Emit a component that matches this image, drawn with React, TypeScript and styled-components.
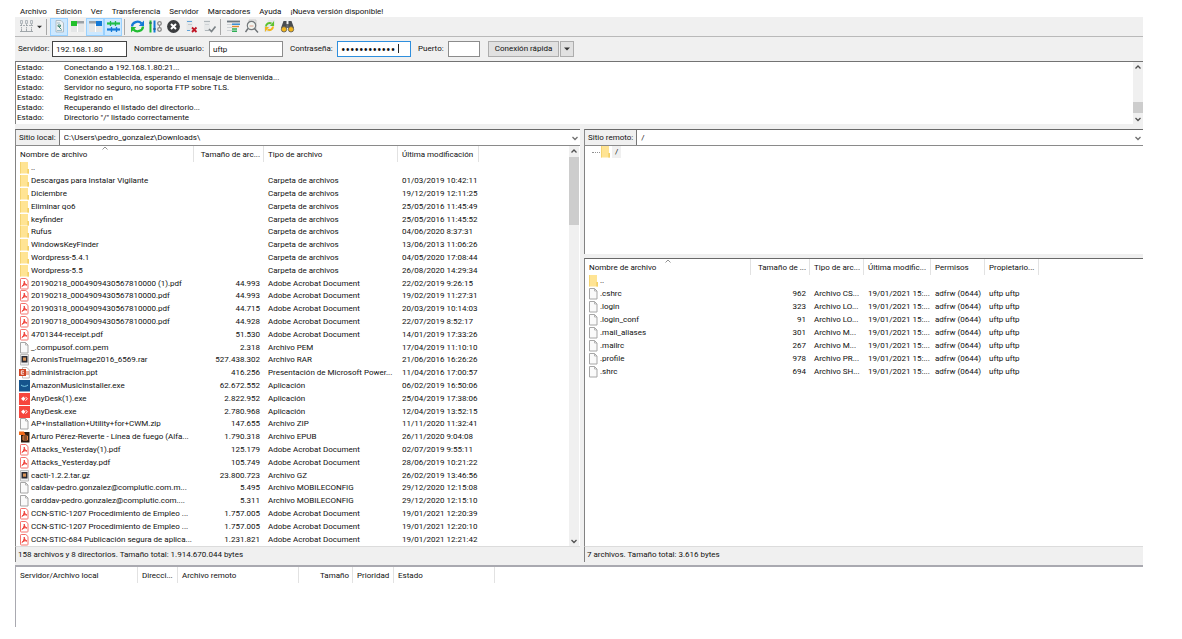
import React from 'react';
import styled, { createGlobalStyle, css } from 'styled-components';

const GlobalStyle = createGlobalStyle`
  *, *::before, *::after { box-sizing: border-box; }
  body { margin: 0; background: #fff; }
  body, button, input, select, table {
    font-family: Roboto, 'Open Sans', sans-serif;
    font-size: 8px;
    line-height: 12px;
    color: #101010;
  }
`;

const Window = styled.div`
  margin: 0 39px 0 15px;
  background: #fff;
`;

/* ---------- menu ---------- */

const MenuBar = styled.nav`
  display: flex;
  align-items: flex-end;
  gap: 9px;
  height: 17px;
  padding-left: 5px;
`;

const MenuItem = styled.button`
  padding: 0;
  border: 0;
  background: none;
  line-height: 10px;
  white-space: nowrap;
`;

/* ---------- toolbar ---------- */

const Toolbar = styled.div`
  display: flex;
  align-items: center;
  height: 20px;
  padding-left: 2px;
  background: #f0f0f0;
  border-bottom: 1px solid #b9b9b9;
`;

const ToolButton = styled.button<{ $active?: boolean; $narrow?: boolean }>`
  display: flex;
  align-items: center;
  justify-content: center;
  width: ${(p) => (p.$narrow ? 9 : 18)}px;
  height: 18px;
  padding: 0;
  border: 1px solid transparent;
  background: none;
  ${(p) => p.$active && css`
    background: #cce8ff;
    border-color: #99d1ff;
  `}
  svg { flex: none; }
`;

const ToolSeparator = styled.span`
  width: 1px;
  height: 16px;
  margin: 0 3px 0 2px;
  background: #a8a8a8;
`;

/* ---------- quick connect ---------- */

const QuickBar = styled.form`
  display: flex;
  align-items: center;
  gap: 7px;
  height: 24px;
  padding-left: 3px;
  background: #f0f0f0;
`;

const Field = styled.div`
  position: relative;
  display: flex;
  align-items: center;
`;

const FieldLabel = styled.label<{ $width: number }>`
  width: ${(p) => p.$width}px;
  white-space: nowrap;
`;

const FieldInput = styled.input<{ $width: number; $tone?: string }>`
  width: ${(p) => p.$width}px;
  height: 16px;
  padding: 0 3px;
  border: 1px solid ${(p) => p.$tone || '#8c8c8c'};
  background: #fff;
  outline: none;
  &[type='password'] {
    font-family: 'Open Sans', sans-serif;
    font-size: 12px;
  }
`;

const Caret = styled.span`
  position: absolute;
  right: 12px;
  top: 3px;
  width: 1px;
  height: 9px;
  background: #222;
`;

const ButtonPair = styled.div`
  display: flex;
  gap: 1px;
  padding-left: 1px;
`;

const PushButton = styled.button<{ $width: number }>`
  display: flex;
  align-items: center;
  justify-content: center;
  width: ${(p) => p.$width}px;
  height: 16px;
  padding: 0;
  border: 1px solid #adadad;
  background: #e1e1e1;
  white-space: nowrap;
`;

/* ---------- message log ---------- */

const LogPanel = styled.section`
  display: flex;
  justify-content: space-between;
  height: 63px;
  border-top: 1px solid #737373;
  border-left: 1px solid #828282;
`;

const LogLines = styled.dl`
  display: grid;
  grid-template-columns: 47px auto;
  grid-auto-rows: 10px;
  align-content: start;
  margin: 0;
  padding: 1px 0 0 1px;
  line-height: 10px;
  dd { margin: 0; }
`;

/* ---------- scroll bar ---------- */

const ScrollTrack = styled.div`
  display: flex;
  flex-direction: column;
  align-items: center;
  flex: none;
  width: 10px;
  background: #f0f0f0;
  svg { flex: none; }
`;

const ScrollThumb = styled.div<{ $height: number; $before: number }>`
  width: 100%;
  height: ${(p) => p.$height}px;
  margin-top: ${(p) => p.$before}px;
  margin-bottom: auto;
  background: #cdcdcd;
`;

/* ---------- panes ---------- */

const Panes = styled.main`
  display: grid;
  grid-template-columns: 565fr 559fr;
  gap: 4px;
  padding: 5px 0 3px;
  background: #f0f0f0;
`;

const Pane = styled.section`
  display: flex;
  flex-direction: column;
  min-width: 0;
`;

const PathBar = styled.div`
  display: flex;
  align-items: stretch;
  height: 17px;
  border: solid #8a8a8a;
  border-width: 1px 0 1px 1px;
  border-top-color: #696969;
  background: #fff;
  padding-right: 1px;
  svg { align-self: center; flex: none; }
`;

const PathLabel = styled.label`
  padding: 2px 3px 0;
  background: #f0f0f0;
  border-right: 1px solid #777;
  white-space: nowrap;
`;

const PathSelect = styled.select`
  flex: 1;
  min-width: 0;
  padding: 0 4px;
  border: 0;
  background: #fff;
  appearance: none;
  outline: none;
`;

const ListArea = styled.div<{ $topped?: boolean }>`
  display: flex;
  flex: 1;
  align-items: flex-start;
  border-left: 1px solid #828282;
  border-top: ${(p) => (p.$topped ? '1px solid #696969' : '0')};
  background: #fff;
  ${ScrollTrack} { align-self: stretch; margin-right: 1px; }
`;

const Tree = styled.ul`
  height: 108px;
  margin: 0 0 4px;
  padding: 0 0 0 7px;
  list-style: none;
  border-left: 1px solid #828282;
  background: #fff;
`;

const TreeItem = styled.li`
  display: flex;
  align-items: center;
  height: 12px;
`;

const TreeLine = styled.span`
  width: 8px;
  border-top: 1px dotted #909090;
`;

const TreeText = styled.span`
  margin-left: 1px;
  padding: 0 3px;
  background: #f0f0f0;
`;

const PaneStatus = styled.footer`
  height: 16px;
  padding: 2px;
  border-left: 1px solid #828282;
  border-top: 1px solid #dcdcdc;
  background: #f0f0f0;
`;

/* ---------- tables ---------- */

const DataTable = styled.table<{ $height?: number }>`
  flex: 1;
  width: 100%;
  height: ${(p) => (p.$height ? `${p.$height}px` : 'auto')};
  table-layout: fixed;
  border-collapse: separate;
  border-spacing: 0;
`;

const HeadCell = styled.th<{ $right?: boolean; $last?: boolean }>`
  position: relative;
  height: 16px;
  padding: 1px ${(p) => (p.$right ? 3 : 0)}px 0 4px;
  border-right: ${(p) => (p.$last ? '0' : '1px solid #e2e2e2')};
  font-weight: 400;
  text-align: ${(p) => (p.$right ? 'right' : 'left')};
  white-space: nowrap;
`;

const SortMark = styled.svg`
  position: absolute;
  left: calc(50% - 3px);
  top: 0;
`;

const Cell = styled.td<{ $right?: boolean }>`
  padding: 0 ${(p) => (p.$right ? 4 : 0)}px 0 4px;
  text-align: ${(p) => (p.$right ? 'right' : 'left')};
  white-space: nowrap;
`;

const NameCell = styled.td`
  padding: 0 0 0 3px;
  white-space: nowrap;
`;

const NameWrap = styled.div`
  display: flex;
  align-items: center;
  gap: 1px;
  svg { flex: none; }
`;

const QueuePanel = styled.section`
  height: 62px;
  border-top: 2px solid #a9a9b0;
  border-left: 1px solid #a9a9b0;
`;

/* ---------- file icons ---------- */

type Kind = 'folder' | 'pdf' | 'file' | 'archive' | 'ppt' | 'amazon' | 'anydesk' | 'epub';

function FileIcon({ kind }: { kind: Kind }) {
  return (
    <svg width="11" height="12" viewBox="0 0 11 12" aria-hidden="true">
      {kind === 'folder' && (
        <>
          <path d="M1 0h8v7.500h1V11.500H1z" fill="#ffe494" />
          <path d="M1 0h.8v11.500H1zM8.300 7H10v4.500H8.300z" fill="#f2d06a" />
        </>
      )}
      {kind === 'pdf' && (
        <>
          <path d="M2.200.5h4.600l2.200 2v7.800a.7.7 0 0 1-.7.7H2.200a.7.7 0 0 1-.7-.7V1.200a.7.7 0 0 1 .7-.7z" fill="#fff" stroke="#f4726d" />
          <path d="M2.800 8.500C4.500 7.400 5.300 5 5.200 3.100c.6 2.500 1.300 3.300 2.800 4C6.300 6.500 4.600 7 2.800 8.500z" fill="#f2544d" stroke="#ee3a32" strokeWidth=".9" />
        </>
      )}
      {kind === 'file' && (
        <>
          <path d="M1.500.5h5l2.500 2.500v8h-7.500z" fill="#fafafa" stroke="#a6a6a6" />
          <path d="M6.500.5V3h2.500" fill="none" stroke="#a6a6a6" strokeWidth=".8" />
        </>
      )}
      {kind === 'archive' && (
        <>
          <path d="M1.500.5h8v10.500h-8z" fill="#ededed" stroke="#bdbdbd" />
          <path d="M2.500 2h6v6.500h-6z" fill="#2b2b33" />
          <path d="M4 3.500h3v3.200H4z" fill="#d99458" />
        </>
      )}
      {kind === 'ppt' && (
        <>
          <path d="M3.500.5h4.500l2.300 2.500v8h-6.800z" fill="#fff" stroke="#b5a9a4" strokeWidth=".8" />
          <path d="M7 4.500h3v1H7zM7 6.500h3v1H7z" fill="#e06a45" />
          <path d="M0 2h7v7H0z" fill="#d04423" />
          <path d="M4.800 3.800H2.300v3.400h2.500M4.800 5.500H3.500" fill="none" stroke="#fff" strokeWidth=".9" />
        </>
      )}
      {kind === 'amazon' && (
        <>
          <path d="M0 0h11v11.500H0z" fill="#15548c" />
          <path d="M2 5c2 1.800 5 1.800 7 0" fill="none" stroke="#7fd0ea" />
        </>
      )}
      {kind === 'anydesk' && (
        <>
          <path d="M0 0h11v12H0z" fill="#f6463d" />
          <path d="M4.300 3.600L6.500 5.800 4.300 8 2.100 5.800z" fill="#fff" />
          <path d="M6.500 3.900L8.400 5.800 6.500 7.700" fill="none" stroke="#fff" />
        </>
      )}
      {kind === 'epub' && (
        <>
          <path d="M2 1h8.500v10.500H2z" fill="#2b1b12" />
          <path d="M0 .5h5l1.500 3.500H0z" fill="#f26a1b" />
          <path d="M4 5h4.500v4H4zM4 7h4" fill="none" stroke="#e88344" />
        </>
      )}
    </svg>
  );
}

function Chevron({ up = false, color = '#505050' }: { up?: boolean; color?: string }) {
  return (
    <svg width="8" height="10" viewBox="0 0 8 10" aria-hidden="true">
      <path d={up ? 'M1.500 6.500L4 4l2.500 2.500' : 'M1.500 4L4 6.500 6.500 4'} fill="none" stroke={color} strokeWidth="1.300" />
    </svg>
  );
}

const DownTriangle = ({ size = 6 }: { size?: number }) => (
  <svg width={size} height="4" viewBox="0 0 6 4" aria-hidden="true">
    <path d="M0 .5h6L3 3.500z" fill="#333" />
  </svg>
);

/* ---------- toolbar icons ---------- */

const toolIcons: Record<string, React.ReactNode> = {
  sites: (
    <>
      <path d="M1.500 1.500h2v3h-2zM6.500 1.500h2v3h-2zM11.500 1.500h2v3h-2z" fill="#e4e7e9" stroke="#a4abb0" strokeWidth=".8" />
      <path d="M2.500 5v4M7.500 5v4M12.500 5v4M1 6.500h13" stroke="#979ea3" fill="none" strokeWidth=".8" strokeDasharray="2 1" />
      <path d="M1 12.500h13M2.500 9.500v3M7.500 9.500v3M12.500 9.500v3" stroke="#979ea3" strokeWidth=".9" fill="none" />
    </>
  ),
  log: (
    <>
      <path d="M4 1.500h5l2.500 2.500v9H4z" fill="#eef2f4" stroke="#a3b1ba" strokeWidth=".8" />
      <path d="M5 4h3M5 11.500h5" stroke="#86aec0" strokeWidth=".8" />
      <path d="M6 6h2.500v1.500H6zM7 8l2.500 2.500" fill="none" stroke="#4c8f7a" />
    </>
  ),
  localTree: (
    <>
      <path d="M1 2h13v11H1z" fill="#e4e6e7" />
      <path d="M1 2h13v2.500H1z" fill="#9aa1a6" />
      <path d="M1 2h6v5H1z" fill="#21c02c" />
      <path d="M7.500 5v8" stroke="#fff" />
    </>
  ),
  remoteTree: (
    <>
      <path d="M1 2h13v11H1z" fill="#e4e6e7" />
      <path d="M1 2h13v2.500H1z" fill="#9aa1a6" />
      <path d="M8 2h6v5H8z" fill="#1479d6" />
      <path d="M7.500 5v8" stroke="#fff" />
    </>
  ),
  queue: (
    <>
      <path d="M1 4.500h13" stroke="#21c04a" strokeWidth="2.200" fill="none" />
      <path d="M4.500 2v5M9.500 2v5" stroke="#21b84a" strokeWidth="1.300" fill="none" />
      <path d="M1 10.500h13" stroke="#1479d6" strokeWidth="2.200" fill="none" />
      <path d="M5.500 8v5M10.500 8v5" stroke="#1479d6" strokeWidth="1.300" fill="none" />
    </>
  ),
  refresh: (
    <>
      <path d="M2 7.500a5.500 5 0 0 1 9.500-3.200" stroke="#1479d6" strokeWidth="2.300" fill="none" />
      <path d="M14 1.500v5.500H8.800z" fill="#1479d6" />
      <path d="M13 7.500a5.500 5 0 0 1-9.500 3.200" stroke="#22bd33" strokeWidth="2.300" fill="none" />
      <path d="M1 13.500V8h5.200z" fill="#22bd33" />
    </>
  ),
  process: (
    <>
      <path d="M2.500 1.500v12" stroke="#22bd33" strokeWidth="2" />
      <path d="M6.500 1.500v12" stroke="#1479d6" strokeWidth="2" />
      <path d="M1 4h3M5 10h3" stroke="#25506e" />
      <circle cx="11.500" cy="4.500" r="1.800" fill="none" stroke="#888" strokeWidth="1.300" />
      <circle cx="11.500" cy="10.500" r="1.800" fill="none" stroke="#888" strokeWidth="1.300" />
      <path d="M11.500 6v3" stroke="#888" />
    </>
  ),
  cancel: (
    <>
      <circle cx="7.500" cy="7.500" r="6.400" fill="#3b3d3f" />
      <path d="M5 5l5 5M10 5l-5 5" stroke="#fff" strokeWidth="2" />
    </>
  ),
  disconnect: (
    <>
      <path d="M2.500 1h6v11h-6z" fill="#e6e8e9" />
      <path d="M3 2.500h5M3 11.500h3" stroke="#5fa2d8" />
      <path d="M4 5.500h4" stroke="#c5cacd" />
      <path d="M8 8.500l4.500 4.500M12.500 8.500L8 13" stroke="#c01525" strokeWidth="1.800" />
    </>
  ),
  reconnect: (
    <>
      <path d="M2 1h6v11H2z" fill="#e6e8e9" />
      <path d="M2 2.500h6M3 11.500h4" stroke="#aeb5b9" />
      <path d="M3 5.500h4" stroke="#cfd3d6" />
      <path d="M7 10l2.500 2.500L13.500 7.500" fill="none" stroke="#7c8387" strokeWidth="1.700" />
    </>
  ),
  filter: (
    <>
      <path d="M1 2.500h13" stroke="#6b757d" strokeWidth="1.800" />
      <path d="M1 5.500h5M1 8.500h5M1 11.500h5" stroke="#cdd1d4" />
      <path d="M6 5.200h8" stroke="#2a85d0" strokeWidth="1.400" />
      <path d="M6 7.500h7" stroke="#e08b2d" strokeWidth="1.400" />
      <path d="M6 10h5M6 12.300h5" stroke="#2eae55" strokeWidth="1.400" />
    </>
  ),
  search: (
    <>
      <path d="M5 1h7v9H5z" fill="#eee" stroke="#b7b7b7" strokeWidth=".6" />
      <circle cx="7.500" cy="6.500" r="4.200" fill="#eff3ef" stroke="#74797c" strokeWidth="1.200" />
      <path d="M5.500 7h4" stroke="#e0a18c" />
      <path d="M10.500 9.500l3.500 4M4 9.500L1.500 13" stroke="#6d7275" strokeWidth="1.400" />
    </>
  ),
  sync: (
    <>
      <path d="M6 1h7v6H6zM2 7h6v6H2z" fill="#e3e6e7" />
      <path d="M4 7.500a3.600 3.600 0 0 1 5.500-3" stroke="#5cc22f" strokeWidth="2" fill="none" />
      <path d="M12 2v5H8z" fill="#5cc22f" />
      <path d="M11 7.500a3.600 3.600 0 0 1-5.500 3" stroke="#f2b51d" strokeWidth="2" fill="none" />
      <path d="M3 13V8h4z" fill="#f2b51d" />
    </>
  ),
  find: (
    <>
      <path d="M3.500 2h3v3h2V2h3l2.500 7H1z" fill="#4a4d50" />
      <circle cx="4" cy="10.300" r="2.700" fill="#f2b51d" stroke="#55585a" strokeWidth=".8" />
      <circle cx="11" cy="10.300" r="2.700" fill="#f2b51d" stroke="#55585a" strokeWidth=".8" />
      <path d="M6.500 5h2v4h-2z" fill="#6b6f72" />
    </>
  ),
};

function Tool({ name, label, active }: { name: string; label: string; active?: boolean }) {
  return (
    <ToolButton type="button" aria-label={label} $active={active}>
      <svg width="15" height="15" viewBox="0 0 15 15">{toolIcons[name]}</svg>
    </ToolButton>
  );
}

/* ---------- data ---------- */

const menu = ['Archivo', 'Edición', 'Ver', 'Transferencia', 'Servidor', 'Marcadores', 'Ayuda', '¡Nueva versión disponible!'];

const log = [
  'Conectando a 192.168.1.80:21...',
  'Conexión establecida, esperando el mensaje de bienvenida...',
  'Servidor no seguro, no soporta FTP sobre TLS.',
  'Registrado en',
  'Recuperando el listado del directorio...',
  'Directorio "/" listado correctamente',
];

type Row = [Kind, ...string[]];

const PDF = 'Adobe Acrobat Document';
const DIR = 'Carpeta de archivos';

const localRows: Row[] = [
  ['folder', '..', '', '', ''],
  ['folder', 'Descargas para Instalar Vigilante', '', DIR, '01/03/2019 10:42:11'],
  ['folder', 'Diciembre', '', DIR, '19/12/2019 12:11:25'],
  ['folder', 'Eliminar qo6', '', DIR, '25/05/2016 11:45:49'],
  ['folder', 'keyfinder', '', DIR, '25/05/2016 11:45:52'],
  ['folder', 'Rufus', '', DIR, '04/06/2020 8:37:31'],
  ['folder', 'WindowsKeyFinder', '', DIR, '13/06/2013 11:06:26'],
  ['folder', 'Wordpress-5.4.1', '', DIR, '04/05/2020 17:08:44'],
  ['folder', 'Wordpress-5.5', '', DIR, '26/08/2020 14:29:34'],
  ['pdf', '20190218_0004909430567810000 (1).pdf', '44.993', PDF, '22/02/2019 9:26:15'],
  ['pdf', '20190218_0004909430567810000.pdf', '44.993', PDF, '19/02/2019 11:27:31'],
  ['pdf', '20190318_0004909430567810000.pdf', '44.715', PDF, '20/03/2019 10:14:03'],
  ['pdf', '20190718_0004909430567810000.pdf', '44.928', PDF, '22/07/2019 8:52:17'],
  ['pdf', '4701344-receipt.pdf', '51.530', PDF, '14/01/2019 17:33:26'],
  ['file', '_.compusof.com.pem', '2.318', 'Archivo PEM', '17/04/2019 11:10:10'],
  ['archive', 'AcronisTrueImage2016_6569.rar', '527.438.302', 'Archivo RAR', '21/06/2016 16:26:26'],
  ['ppt', 'administracion.ppt', '416.256', 'Presentación de Microsoft Power...', '11/04/2016 17:00:57'],
  ['amazon', 'AmazonMusicInstaller.exe', '62.672.552', 'Aplicación', '06/02/2019 16:50:06'],
  ['anydesk', 'AnyDesk(1).exe', '2.822.952', 'Aplicación', '25/04/2019 17:38:06'],
  ['anydesk', 'AnyDesk.exe', '2.780.968', 'Aplicación', '12/04/2019 13:52:15'],
  ['file', 'AP+Installation+Utility+for+CWM.zip', '147.655', 'Archivo ZIP', '11/11/2020 11:32:41'],
  ['epub', 'Arturo Pérez-Reverte - Línea de fuego (Alfa...', '1.790.318', 'Archivo EPUB', '26/11/2020 9:04:08'],
  ['pdf', 'Attacks_Yesterday(1).pdf', '125.179', PDF, '02/07/2019 9:55:11'],
  ['pdf', 'Attacks_Yesterday.pdf', '105.749', PDF, '28/06/2019 10:21:22'],
  ['archive', 'cacti-1.2.2.tar.gz', '23.800.723', 'Archivo GZ', '26/02/2019 13:46:56'],
  ['file', 'caldav-pedro.gonzalez@complutic.com.m...', '5.495', 'Archivo MOBILECONFIG', '29/12/2020 12:15:08'],
  ['file', 'carddav-pedro.gonzalez@complutic.com....', '5.311', 'Archivo MOBILECONFIG', '29/12/2020 12:15:10'],
  ['pdf', 'CCN-STIC-1207 Procedimiento de Empleo ...', '1.757.005', PDF, '19/01/2021 12:20:39'],
  ['pdf', 'CCN-STIC-1207 Procedimiento de Empleo ...', '1.757.005', PDF, '19/01/2021 12:20:10'],
  ['pdf', 'CCN-STIC-684 Publicación segura de aplica...', '1.231.821', PDF, '19/01/2021 12:21:42'],
];

const remoteFile = (name: string, size: string, type: string): Row => [
  'file', name, size, type, '19/01/2021 15:...', 'adfrw (0644)', 'uftp uftp',
];

const remoteRows: Row[] = [
  ['folder', '..', '', '', '', '', ''],
  remoteFile('.cshrc', '962', 'Archivo CS...'),
  remoteFile('.login', '323', 'Archivo LO...'),
  remoteFile('.login_conf', '91', 'Archivo LO...'),
  remoteFile('.mail_aliases', '301', 'Archivo M...'),
  remoteFile('.mailrc', '267', 'Archivo M...'),
  remoteFile('.profile', '978', 'Archivo PR...'),
  remoteFile('.shrc', '694', 'Archivo SH...'),
];

interface Column {
  title: string;
  width: number;
  right?: boolean;
  sorted?: boolean;
}

const localColumns: Column[] = [
  { title: 'Nombre de archivo', width: 178, sorted: true },
  { title: 'Tamaño de arc...', width: 70, right: true },
  { title: 'Tipo de archivo', width: 134 },
  { title: 'Última modificación', width: 81 },
];

const remoteColumns: Column[] = [
  { title: 'Nombre de archivo', width: 166, sorted: true },
  { title: 'Tamaño de ...', width: 59, right: true },
  { title: 'Tipo de arc...', width: 54 },
  { title: 'Última modific...', width: 67 },
  { title: 'Permisos', width: 54 },
  { title: 'Propietario...', width: 54 },
];

const queueColumns: Column[] = [
  { title: 'Servidor/Archivo local', width: 122 },
  { title: 'Direcci...', width: 40 },
  { title: 'Archivo remoto', width: 121 },
  { title: 'Tamaño', width: 54, right: true },
  { title: 'Prioridad', width: 41 },
  { title: 'Estado', width: 101 },
];

function FileTable({ columns, rows, height, label }: { columns: Column[]; rows: Row[]; height?: number; label: string }) {
  return (
    <DataTable $height={height} aria-label={label}>
      <colgroup>
        {columns.map((c) => <col key={c.title} width={c.width} />)}
        <col />
      </colgroup>
      <thead>
        <tr>
          {columns.map((c) => (
            <HeadCell key={c.title} scope="col" $right={c.right}>
              {c.title}
              {c.sorted && (
                <SortMark width="6" height="4" viewBox="0 0 6 4" aria-hidden="true">
                  <path d="M.5 3.500L3 1l2.500 2.500" fill="none" stroke="#777" strokeWidth=".8" />
                </SortMark>
              )}
            </HeadCell>
          ))}
          <HeadCell as="td" $last />
        </tr>
      </thead>
      <tbody>
        {rows.map(([kind, name, ...rest], i) => (
          <tr key={i}>
            <NameCell>
              <NameWrap>
                <FileIcon kind={kind} />
                <span>{name}</span>
              </NameWrap>
            </NameCell>
            {rest.map((text, n) => (
              <Cell key={n} $right={n === 0}>{text}</Cell>
            ))}
            <Cell />
          </tr>
        ))}
      </tbody>
    </DataTable>
  );
}

export default function App() {
  return (
    <Window>
      <GlobalStyle />
      <MenuBar>
        {menu.map((m) => <MenuItem key={m} type="button">{m}</MenuItem>)}
      </MenuBar>

      <Toolbar role="toolbar">
        <Tool name="sites" label="Gestor de sitios" />
        <ToolButton type="button" $narrow aria-label="Lista de sitios"><DownTriangle size={5} /></ToolButton>
        <ToolSeparator />
        <Tool name="log" label="Registro de mensajes" active />
        <Tool name="localTree" label="Árbol local" />
        <Tool name="remoteTree" label="Árbol remoto" active />
        <Tool name="queue" label="Cola de transferencia" active />
        <ToolSeparator />
        <Tool name="refresh" label="Actualizar" />
        <Tool name="process" label="Procesar cola" />
        <Tool name="cancel" label="Cancelar" />
        <Tool name="disconnect" label="Desconectar" />
        <Tool name="reconnect" label="Reconectar" />
        <ToolSeparator />
        <Tool name="filter" label="Filtros" />
        <Tool name="search" label="Comparar directorios" />
        <Tool name="sync" label="Navegación sincronizada" />
        <Tool name="find" label="Buscar archivos" />
      </Toolbar>

      <QuickBar onSubmit={(e) => e.preventDefault()}>
        <Field>
          <FieldLabel htmlFor="host" $width={34}>Servidor:</FieldLabel>
          <FieldInput id="host" $width={75} $tone="#444" defaultValue="192.168.1.80" />
        </Field>
        <Field>
          <FieldLabel htmlFor="user" $width={75}>Nombre de usuario:</FieldLabel>
          <FieldInput id="user" $width={74} defaultValue="uftp" />
        </Field>
        <Field>
          <FieldLabel htmlFor="pass" $width={47}>Contraseña:</FieldLabel>
          <FieldInput id="pass" type="password" $width={74} $tone="#2f8fdd" defaultValue="123456789012" />
          <Caret />
        </Field>
        <Field>
          <FieldLabel htmlFor="port" $width={30}>Puerto:</FieldLabel>
          <FieldInput id="port" $width={32} />
        </Field>
        <ButtonPair>
          <PushButton type="submit" $width={71}>Conexión rápida</PushButton>
          <PushButton type="button" $width={14} aria-label="Historial"><DownTriangle /></PushButton>
        </ButtonPair>
      </QuickBar>

      <LogPanel>
        <LogLines>
          {log.map((line) => (
            <React.Fragment key={line}>
              <dt>Estado:</dt>
              <dd>{line}</dd>
            </React.Fragment>
          ))}
        </LogLines>
        <ScrollTrack>
          <Chevron up />
          <ScrollThumb $height={11} $before={30} />
          <Chevron />
        </ScrollTrack>
      </LogPanel>

      <Panes>
        <Pane>
          <PathBar>
            <PathLabel htmlFor="local-path">Sitio local:</PathLabel>
            <PathSelect id="local-path">
              <option>C:\Users\pedro_gonzalez\Downloads\</option>
            </PathSelect>
            <Chevron color="#707070" />
          </PathBar>
          <ListArea>
            <FileTable label="Archivos locales" columns={localColumns} rows={localRows} height={400} />
            <ScrollTrack>
              <Chevron up />
              <ScrollThumb $height={68} $before={1} />
              <Chevron />
            </ScrollTrack>
          </ListArea>
          <PaneStatus>158 archivos y 8 directorios. Tamaño total: 1.914.670.044 bytes</PaneStatus>
        </Pane>

        <Pane>
          <PathBar>
            <PathLabel htmlFor="remote-path">Sitio remoto:</PathLabel>
            <PathSelect id="remote-path">
              <option>/</option>
            </PathSelect>
            <Chevron color="#707070" />
          </PathBar>
          <Tree>
            <TreeItem>
              <TreeLine />
              <FileIcon kind="folder" />
              <TreeText>/</TreeText>
            </TreeItem>
          </Tree>
          <ListArea $topped>
            <FileTable label="Archivos remotos" columns={remoteColumns} rows={remoteRows} height={119} />
          </ListArea>
          <PaneStatus>7 archivos. Tamaño total: 3.616 bytes</PaneStatus>
        </Pane>
      </Panes>

      <QueuePanel>
        <FileTable label="Cola de transferencia" columns={queueColumns} rows={[]} />
      </QueuePanel>
    </Window>
  );
}
